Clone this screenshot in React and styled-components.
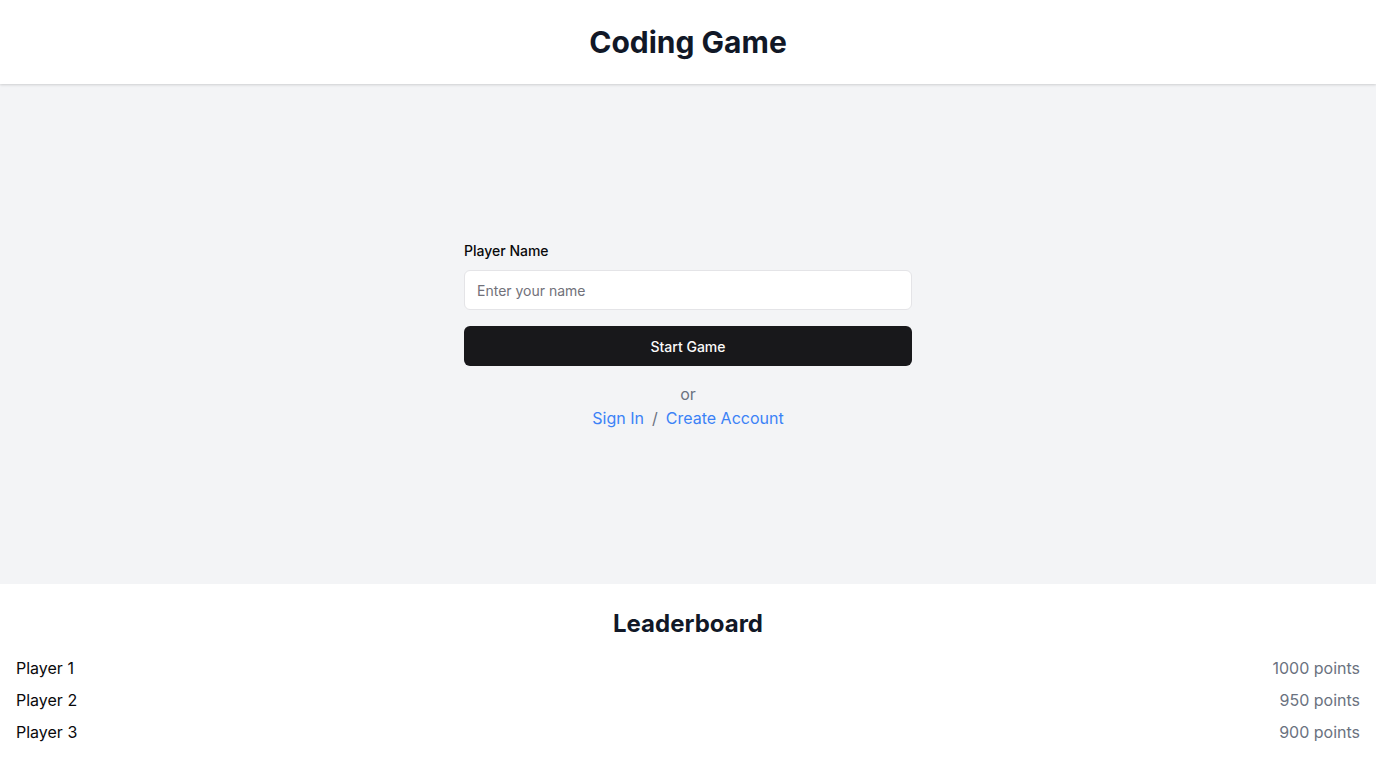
import React from "react";
import styled, { createGlobalStyle } from "styled-components";

const Global = createGlobalStyle`
  html, body { margin: 0; padding: 0; }
  body { font-family: Inter, "Noto Sans", sans-serif; background: #ffffff; color: #111827; }
  * { box-sizing: border-box; }
`;

const Page = styled.div`
  display: flex;
  flex-direction: column;
  min-height: 768px;
`;

const Header = styled.header`
  background: #ffffff;
  padding: 24px 16px;
  box-shadow: 0 1px 3px rgba(0, 0, 0, 0.1), 0 1px 2px rgba(0, 0, 0, 0.06);
  position: relative;
  z-index: 1;
`;

const Title = styled.h1`
  margin: 0;
  text-align: center;
  font-size: 30px;
  line-height: 36px;
  font-weight: 700;
  color: #111827;
`;

const Main = styled.main`
  flex: 1;
  background: #f3f4f6;
  display: flex;
  align-items: center;
  justify-content: center;
  padding: 19px 16px 16px;
`;

const Form = styled.form`
  width: 448px;
  display: flex;
  flex-direction: column;
`;

const Label = styled.label`
  font-size: 14px;
  line-height: 20px;
  font-weight: 500;
  color: #09090b;
  margin-bottom: 9px;
`;

const Input = styled.input`
  height: 40px;
  width: 100%;
  border: 1px solid #e4e4e7;
  border-radius: 6px;
  background: #ffffff;
  padding: 0 12px;
  font-family: inherit;
  font-size: 14px;
  color: #09090b;
  outline: none;
  &::placeholder { color: #71717a; }
`;

const Button = styled.button`
  margin-top: 16px;
  height: 40px;
  width: 100%;
  border: none;
  border-radius: 6px;
  background: #18181b;
  color: #fafafa;
  font-family: inherit;
  font-size: 14px;
  font-weight: 500;
  cursor: pointer;
`;

const Alt = styled.div`
  margin-top: 16px;
  text-align: center;
  font-size: 16px;
  line-height: 24px;
  color: #6b7280;
`;

const LinkRow = styled.div`
  display: flex;
  justify-content: center;
  gap: 8px;
  font-size: 16px;
  line-height: 24px;
  color: #6b7280;
`;

const Link = styled.a`
  color: #3b82f6;
  text-decoration: none;
  cursor: pointer;
`;

const Footer = styled.footer`
  background: #ffffff;
  padding: 24px 16px 24px;
`;

const BoardTitle = styled.h2`
  margin: 0 0 16px;
  text-align: center;
  font-size: 24px;
  line-height: 32px;
  font-weight: 700;
  color: #111827;
`;

const List = styled.ul`
  list-style: none;
  margin: 0;
  padding: 0;
  display: flex;
  flex-direction: column;
  gap: 8px;
`;

const Row = styled.li`
  display: flex;
  justify-content: space-between;
  font-size: 16px;
  line-height: 24px;
`;

const Name = styled.span`
  color: #09090b;
  font-weight: 400;
`;

const Score = styled.span`
  color: #6b7280;
`;

const players = [
  { name: "Player 1", score: 1000 },
  { name: "Player 2", score: 950 },
  { name: "Player 3", score: 900 },
];

export default function App() {
  return (
    <>
      <Global />
      <Page>
        <Header>
          <Title>Coding Game</Title>
        </Header>
        <Main>
          <Form onSubmit={(e) => e.preventDefault()}>
            <Label htmlFor="player">Player Name</Label>
            <Input id="player" placeholder="Enter your name" />
            <Button type="submit">Start Game</Button>
            <Alt>or</Alt>
            <LinkRow>
              <Link>Sign In</Link>
              <span>/</span>
              <Link>Create Account</Link>
            </LinkRow>
          </Form>
        </Main>
        <Footer>
          <BoardTitle>Leaderboard</BoardTitle>
          <List>
            {players.map((p) => (
              <Row key={p.name}>
                <Name>{p.name}</Name>
                <Score>{p.score} points</Score>
              </Row>
            ))}
          </List>
        </Footer>
      </Page>
    </>
  );
}
